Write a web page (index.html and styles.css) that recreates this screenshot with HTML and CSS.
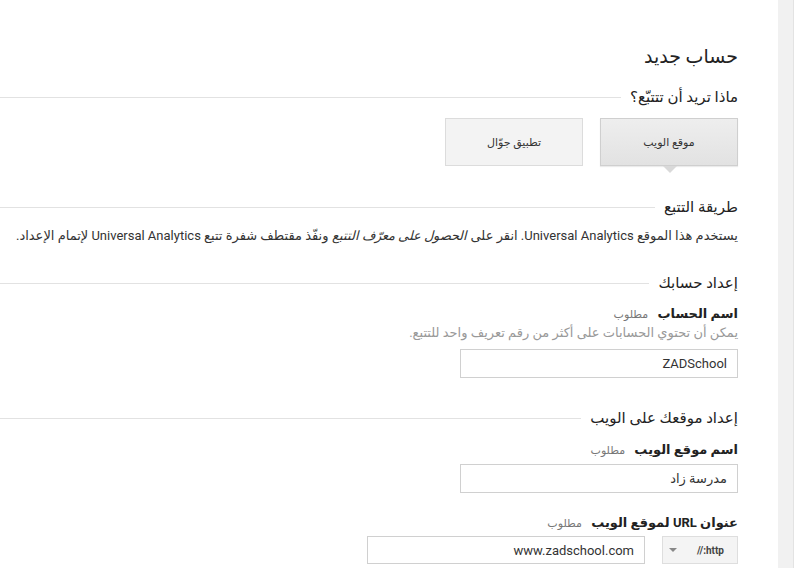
FILE: index.html
```html
<!DOCTYPE html>
<html lang="ar" dir="rtl">
  <head>
    <meta charset="utf-8">
    <title>حساب جديد</title>
    <link rel="stylesheet" href="styles.css">
  </head>
  <body>
  <div id="page">
    <div id="sidebar"></div>
    <div id="content">
      <h1 id="title">حساب جديد</h1>

      <div class="section">
        <h2 class="sectionHead"><span>ماذا تريد أن تتتبّع؟</span></h2>
        <div class="choices">
          <a class="choice selected">موقع الويب</a>
          <a class="choice">تطبيق جوّال</a>
        </div>
      </div>

      <div class="section method">
        <h2 class="sectionHead"><span>طريقة التتبع</span></h2>
        <p class="desc">يستخدم هذا الموقع Universal Analytics. انقر على <i>الحصول على معرّف التتبع</i> ونفّذ مقتطف شفرة تتبع Universal Analytics لإتمام الإعداد.</p>
      </div>

      <div class="section account">
        <h2 class="sectionHead"><span>إعداد حسابك</span></h2>
        <div class="field">
          <label class="fieldLabel">اسم الحساب <small>مطلوب</small></label>
          <div class="help">يمكن أن تحتوي الحسابات على أكثر من رقم تعريف واحد للتتبع.</div>
          <input class="fixedwidth" type="text" value="ZADSchool">
        </div>
      </div>

      <div class="section site">
        <h2 class="sectionHead"><span>إعداد موقعك على الويب</span></h2>
        <div class="field">
          <label class="fieldLabel">اسم موقع الويب <small>مطلوب</small></label>
          <input class="fixedwidth" type="text" value="مدرسة زاد">
        </div>
        <div class="field url">
          <label class="fieldLabel">عنوان URL لموقع الويب <small>مطلوب</small></label>
          <div class="urlRow">
            <a class="protocol"><b>http://</b><span class="caret"></span></a>
            <input class="fixedwidth" type="text" value="www.zadschool.com" dir="ltr">
          </div>
        </div>
      </div>
    </div>
  </div>
  </body>
</html>
```

FILE: styles.css
```css
html, body {
  margin: 0;
  background: white;
  }
body {
  color: #333;
  font: 13px Roboto, "DejaVu Sans", sans-serif;
  }
#page {
  display: flex;
  min-height: 568px;
  }
#sidebar {
  width: 15px;
  background: #f1f1f1;
  border-right: 1px solid #e3e3e3;
  }
#content {
  flex: 1;
  padding: 45px 40px 0 0;
  }
#title {
  margin: 0;
  font-size: 19px;
  font-weight: normal;
  line-height: 24px;
  color: #222;
  }
.section {
  margin-top: 18px;
  }
.sectionHead {
  display: flex;
  align-items: center;
  margin: 0;
  font-size: 15px;
  font-weight: normal;
  line-height: 20px;
  color: #222;
  }
.sectionHead::after {
  content: "";
  flex: 1;
  height: 1px;
  background: #e2e2e2;
  margin-right: 9px;
  }
.choices {
  display: flex;
  gap: 17px;
  margin-top: 11px;
  }
.choice {
  position: relative;
  display: flex;
  align-items: center;
  justify-content: center;
  box-sizing: border-box;
  width: 138px;
  height: 48px;
  font-size: 11px;
  color: #333;
  background: #f3f3f3;
  border: 1px solid #dcdcdc;
  }
.choice.selected {
  background: linear-gradient(#eeeeee, #e2e2e2);
  border-color: #cfcfcf;
  box-shadow: 0 1px 1px rgba(0,0,0,0.08);
  }
.choice.selected::after {
  content: "";
  position: absolute;
  bottom: -8px;
  left: 62px;
  border-top: 7px solid #d9d9d9;
  border-left: 7px solid transparent;
  border-right: 7px solid transparent;
  }
.method {
  margin-top: 31px;
  }
.desc {
  margin: 10px 0 0;
  line-height: 18px;
  color: #333;
  }
.account {
  margin-top: 28px;
  }
.site {
  margin-top: 30px;
  }
.field {
  margin-top: 12px;
  }
.site .field {
  margin-top: 13px;
  }
.site .field.url {
  margin-top: 21px;
  }
.fieldLabel {
  display: block;
  font-weight: bold;
  line-height: 18px;
  color: #222;
  }
.fieldLabel small {
  margin-right: 6px;
  font-size: 11px;
  font-weight: normal;
  color: #777;
  }
.help {
  margin-top: 0;
  line-height: 18px;
  color: #999;
  }
.fixedwidth {
  display: block;
  box-sizing: border-box;
  width: 278px;
  height: 29px;
  margin-top: 7px;
  padding: 0 10px;
  font: 13px Roboto, "DejaVu Sans", sans-serif;
  color: #333;
  border: 1px solid #d0d0d0;
  border-radius: 0;
  text-align: right;
  }
.site .fixedwidth {
  margin-top: 4px;
  }
.urlRow {
  display: flex;
  gap: 17px;
  margin-top: 3px;
  }
.urlRow .fixedwidth {
  margin-top: 0;
  height: 28px;
  }
.protocol {
  display: flex;
  align-items: center;
  gap: 20px;
  box-sizing: border-box;
  width: 76px;
  height: 28px;
  padding-right: 13px;
  background: #f4f4f4;
  border: 1px solid #dedede;
  font-size: 10px;
  color: #444;
  }
.caret {
  border-top: 4px solid #888;
  border-left: 4px solid transparent;
  border-right: 4px solid transparent;
  }
```
